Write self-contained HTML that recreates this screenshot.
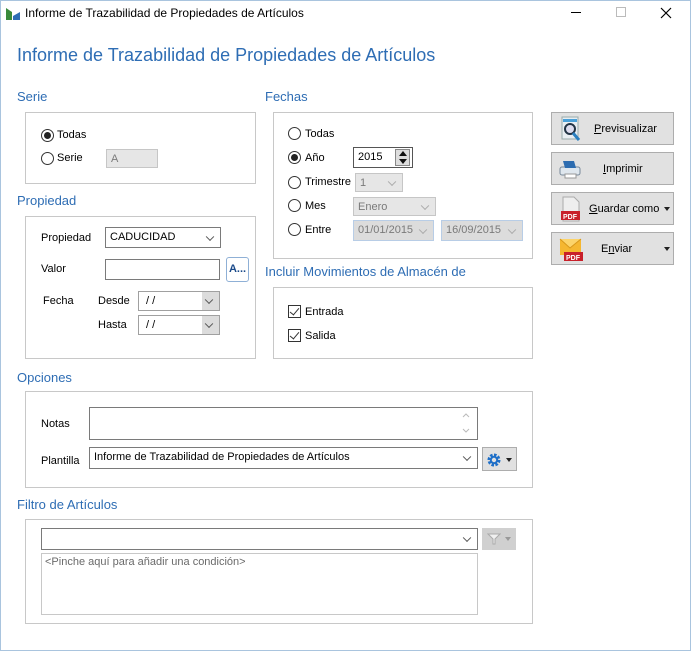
<!DOCTYPE html>
<html><head><meta charset="utf-8"><style>
*{box-sizing:border-box;margin:0;padding:0}
body{width:691px;height:651px;background:#fff;font-family:"Liberation Sans",Arial,sans-serif;font-size:11px;color:#000;position:relative;overflow:hidden}
.a{position:absolute;white-space:nowrap}
.win{position:absolute;left:0;top:0;width:691px;height:651px;border:1px solid #a9c4de}
.h{color:#2e6db4;font-size:13px}
.box{position:absolute;border:1px solid #c8c8c8}
.rad{position:absolute;width:13px;height:13px;border:1px solid #333;border-radius:50%;background:#fff}
.rad.on::after{content:"";position:absolute;left:2px;top:2px;width:7px;height:7px;border-radius:50%;background:#222}
.inp{position:absolute;border:1px solid #7a7a7a;background:#fff;padding:2px 4px;line-height:14px}
.dis{background:#e6e6e6;border-color:#c6c6c6;color:#7a7a7a}
.dd::after{content:"";position:absolute;right:7px;top:50%;width:5px;height:5px;border-right:1px solid #555;border-bottom:1px solid #555;transform:translateY(-70%) rotate(45deg)}
.dis.dd::after{border-color:#aaa}
.grayarrow{position:absolute;right:0;top:0;bottom:0;width:17px;background:#dcdcdc}
.btn{position:absolute;left:551px;width:123px;height:33px;background:#e1e1e1;border:1px solid #adadad}
.btn span{position:absolute;top:10px}
.chk{position:absolute;width:13px;height:13px;border:1px solid #333;background:#fff}
.chk::after{content:"";position:absolute;left:3px;top:0px;width:4px;height:8px;border-right:1.5px solid #333;border-bottom:1.5px solid #333;transform:rotate(40deg)}
.tri{position:absolute;width:0;height:0;border-left:3px solid transparent;border-right:3px solid transparent;border-top:4px solid #222}
</style></head><body>
<div class="win"></div>
<svg class="a" style="left:5px;top:7px" width="16" height="14"><path d="M1 1 L7 5 L7 13 L1 13Z" fill="#3a8a3a"/><path d="M8 9 L15 5 L15 13 L8 13Z" fill="#2e6db4"/></svg>
<div class="a" style="left:25px;top:6px;font-size:12px">Informe de Trazabilidad de Propiedades de Artículos</div>
<div class="a" style="left:571px;top:12px;width:10px;height:1px;background:#000"></div>
<div class="a" style="left:616px;top:7px;width:10px;height:10px;border:1px solid #bbb"></div>
<svg class="a" style="left:660px;top:7px" width="12" height="12"><path d="M1 1L11 11M11 1L1 11" stroke="#000" stroke-width="1.2"/></svg>

<div class="a" style="left:17px;top:45px;font-size:18px;color:#2e6db4">Informe de Trazabilidad de Propiedades de Artículos</div>

<div class="a h" style="left:17px;top:89px">Serie</div>
<div class="box" style="left:25px;top:112px;width:231px;height:72px"></div>
<div class="rad on" style="left:41px;top:129px"></div><div class="a" style="left:57px;top:129px">Todas</div>
<div class="rad" style="left:41px;top:152px"></div><div class="a" style="left:57px;top:152px">Serie</div>
<div class="inp dis" style="left:106px;top:149px;width:52px;height:19px">A</div>

<div class="a h" style="left:17px;top:193px">Propiedad</div>
<div class="box" style="left:25px;top:216px;width:231px;height:143px"></div>
<div class="a" style="left:41px;top:232px">Propiedad</div>
<div class="inp dd" style="left:105px;top:227px;width:116px;height:21px">CADUCIDAD</div>
<div class="a" style="left:41px;top:263px">Valor</div>
<div class="inp" style="left:105px;top:259px;width:115px;height:21px"></div>
<div class="a" style="left:226px;top:257px;width:23px;height:25px;border:1px solid #8fb0d6;border-radius:3px;background:#fff;color:#1a4a8a;font-weight:bold;font-size:11px;text-align:center;line-height:22px">A...</div>
<div class="a" style="left:43px;top:295px">Fecha</div>
<div class="a" style="left:98px;top:295px">Desde</div>
<div class="inp dd" style="left:138px;top:291px;width:82px;height:20px;border-color:#a0a0a0">&nbsp;/ /<div class="grayarrow"></div></div>
<div class="a" style="left:98px;top:319px">Hasta</div>
<div class="inp dd" style="left:138px;top:315px;width:82px;height:20px;border-color:#a0a0a0">&nbsp;/ /<div class="grayarrow"></div></div>

<div class="a h" style="left:265px;top:89px">Fechas</div>
<div class="box" style="left:273px;top:112px;width:260px;height:147px"></div>
<div class="rad" style="left:288px;top:127px"></div><div class="a" style="left:305px;top:128px">Todas</div>
<div class="rad on" style="left:288px;top:151px"></div><div class="a" style="left:305px;top:152px">Año</div>
<div class="inp" style="left:353px;top:147px;width:60px;height:21px;border-color:#555">2015</div>
<div class="a" style="left:395px;top:149px;width:15px;height:17px;background:#ddd;border:1px solid #888"></div>
<div class="a" style="left:399px;top:151px;border-left:4px solid transparent;border-right:4px solid transparent;border-bottom:5px solid #111"></div>
<div class="a" style="left:399px;top:159px;border-left:4px solid transparent;border-right:4px solid transparent;border-top:5px solid #111"></div>
<div class="rad" style="left:288px;top:176px"></div><div class="a" style="left:305px;top:176px">Trimestre</div>
<div class="inp dis dd" style="left:355px;top:173px;width:48px;height:19px">1</div>
<div class="rad" style="left:288px;top:199px"></div><div class="a" style="left:305px;top:200px">Mes</div>
<div class="inp dis dd" style="left:353px;top:197px;width:83px;height:19px">Enero</div>
<div class="rad" style="left:288px;top:223px"></div><div class="a" style="left:305px;top:224px">Entre</div>
<div class="inp dis dd" style="left:353px;top:220px;width:81px;height:21px;border-color:#b8cde6;background:#dcdcdc">01/01/2015</div>
<div class="inp dis dd" style="left:441px;top:220px;width:82px;height:21px;border-color:#b8cde6;background:#dcdcdc">16/09/2015</div>

<div class="a h" style="left:265px;top:264px">Incluir Movimientos de Almacén de</div>
<div class="box" style="left:273px;top:287px;width:260px;height:72px"></div>
<div class="chk" style="left:288px;top:305px"></div><div class="a" style="left:305px;top:306px">Entrada</div>
<div class="chk" style="left:288px;top:329px"></div><div class="a" style="left:305px;top:330px">Salida</div>

<div class="btn" style="top:112px">
<svg class="a" style="left:8px;top:3px" width="22" height="26"><rect x="2" y="1" width="16" height="22" fill="#e8eef2" stroke="#9aa"/><rect x="3" y="3" width="14" height="3" fill="#4aa0d8"/><circle cx="10" cy="13" r="5" fill="#dde" stroke="#234" stroke-width="2"/><path d="M13 17L19 24" stroke="#2a7fc0" stroke-width="3"/></svg>
<span style="left:42px"><u>P</u>revisualizar</span></div>
<div class="btn" style="top:152px">
<svg class="a" style="left:5px;top:5px" width="26" height="22"><rect x="3" y="9" width="20" height="8" rx="2" fill="#dfe7ee" stroke="#789"/><path d="M6 3L17 3L19 10L8 10Z" fill="#2c6cb0"/><rect x="8" y="16" width="11" height="4" fill="#fff" stroke="#999"/></svg>
<span style="left:51px"><u>I</u>mprimir</span></div>
<div class="btn" style="top:192px">
<svg class="a" style="left:8px;top:3px" width="22" height="27"><path d="M3 1L14 1L19 6L19 25L3 25Z" fill="#eee" stroke="#aaa"/><rect x="1" y="15" width="19" height="9" fill="#c8202a"/><text x="3" y="23" font-size="7" font-weight="bold" fill="#fff" font-family="Liberation Sans">PDF</text></svg>
<span style="left:37px"><u>G</u>uardar como</span><div class="tri" style="left:112px;top:14px"></div></div>
<div class="btn" style="top:232px">
<svg class="a" style="left:6px;top:3px" width="26" height="27"><rect x="2" y="3" width="21" height="16" fill="#f5b730"/><path d="M2 3L12 12L23 3" fill="#fcd46a" stroke="#d8981a"/><rect x="6" y="16" width="19" height="9" fill="#c8202a"/><text x="8" y="24" font-size="7" font-weight="bold" fill="#fff" font-family="Liberation Sans">PDF</text></svg>
<span style="left:49px">E<u>n</u>viar</span><div class="tri" style="left:112px;top:14px"></div></div>

<div class="a h" style="left:17px;top:370px">Opciones</div>
<div class="box" style="left:25px;top:391px;width:508px;height:97px"></div>
<div class="a" style="left:41px;top:418px">Notas</div>
<div class="inp" style="left:89px;top:407px;width:389px;height:33px"></div>
<svg class="a" style="left:461px;top:411px" width="10" height="24"><path d="M2 6L5 3L8 6M2 18L5 21L8 18" fill="none" stroke="#bbb"/></svg>
<div class="a" style="left:41px;top:455px">Plantilla</div>
<div class="inp dd" style="left:89px;top:447px;width:389px;height:22px">Informe de Trazabilidad de Propiedades de Artículos</div>
<div class="a" style="left:482px;top:447px;width:35px;height:24px;background:#e1e1e1;border:1px solid #adadad">
<svg class="a" style="left:4px;top:5px" width="14" height="14"><circle cx="7" cy="7" r="5" fill="none" stroke="#1e6fc8" stroke-width="3" stroke-dasharray="2.5 1.4"/><circle cx="7" cy="7" r="3.2" fill="none" stroke="#1e6fc8" stroke-width="2"/></svg>
<div class="tri" style="left:23px;top:10px"></div></div>

<div class="a h" style="left:17px;top:497px">Filtro de Artículos</div>
<div class="box" style="left:25px;top:519px;width:508px;height:105px"></div>
<div class="inp dd" style="left:41px;top:528px;width:437px;height:22px"></div>
<div class="a" style="left:482px;top:528px;width:34px;height:22px;background:#d0d0d0">
<svg class="a" style="left:5px;top:5px" width="14" height="12"><path d="M1 1L13 1L8 6L8 11L6 11L6 6Z" fill="#f0f0f0" stroke="#aaa"/></svg>
<div class="tri" style="left:23px;top:9px;border-top-color:#999"></div></div>
<div class="inp" style="left:41px;top:553px;width:437px;height:62px;border-color:#c8c8c8;color:#6a6a6a;font-size:11px;padding:1px 3px;line-height:14px">&lt;Pinche aquí para añadir una condición&gt;</div>
</body></html>
